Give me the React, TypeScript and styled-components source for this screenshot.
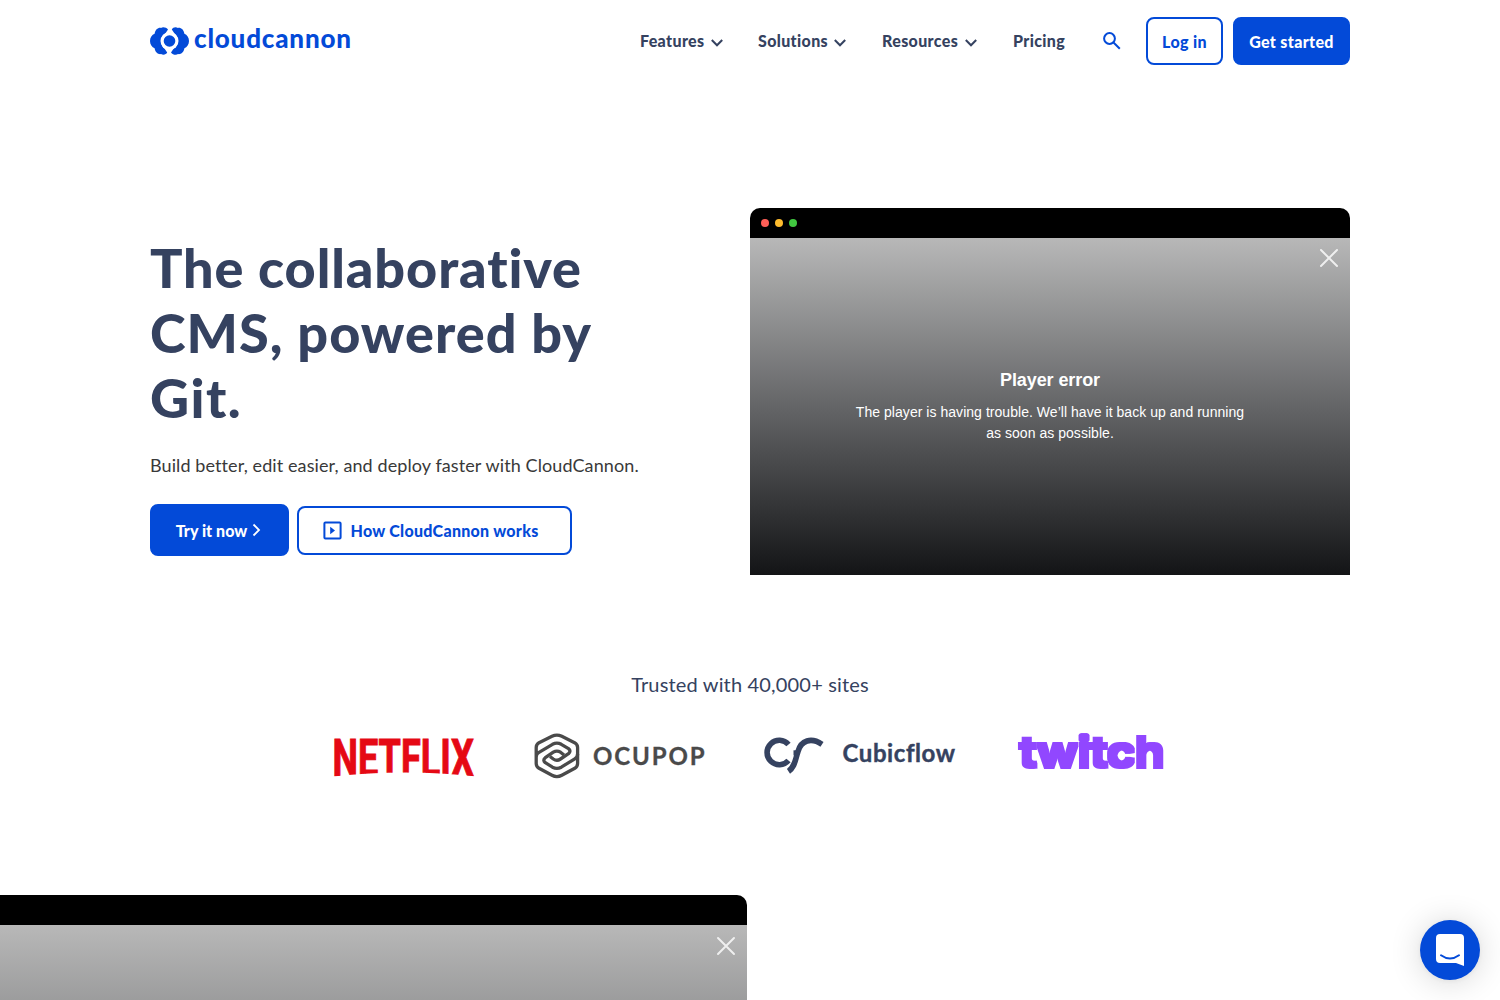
import React from "react";
import styled, { createGlobalStyle } from "styled-components";

const blue = "#034ad8";
const navy = "#354260";

const GlobalStyle = createGlobalStyle`
  * { box-sizing: border-box; }
  html, body { margin: 0; height: 1000px; overflow: hidden; background: #fff; }
  body { font-family: Lato, "Open Sans", sans-serif; font-variant-ligatures: none; color: ${navy}; -webkit-font-smoothing: antialiased; }
  svg { display: block; flex: none; overflow: visible; }
  a { color: inherit; text-decoration: none; }
`;

const Page = styled.div`
  height: 1000px;
  overflow: hidden;
`;

const Header = styled.header`
  width: 1200px;
  height: 82px;
  margin: 0 auto;
  display: flex;
  align-items: center;
  justify-content: space-between;
`;

const Brand = styled.a`
  display: flex;
  padding-top: 2px;
`;

const Nav = styled.nav`
  display: flex;
  align-items: center;
`;

const NavLink = styled.a<{ $w: number; $after?: number }>`
  display: flex;
  align-items: center;
  gap: 6px;
  margin-right: ${(p) => p.$after ?? 35}px;
  font-size: 16px;
  line-height: 24px;
  font-weight: 900;
  letter-spacing: 0.36px;
  white-space: nowrap;
  svg { margin-top: 3px; }
  span { width: ${(p) => p.$w}px; }
`;

const SearchButton = styled.a`
  margin: 0 25px 0 3px;
`;

const Button = styled.a<{ $filled?: boolean; $w: number; $h: number; $ls?: number }>`
  width: ${(p) => p.$w}px;
  height: ${(p) => p.$h}px;
  display: flex;
  align-items: center;
  justify-content: center;
  border: 2px solid ${blue};
  border-radius: 8px;
  background: ${(p) => (p.$filled ? blue : "#fff")};
  color: ${(p) => (p.$filled ? "#fff" : blue)};
  font-size: 16px;
  font-weight: 900;
  letter-spacing: ${(p) => p.$ls ?? 0.35}px;
  white-space: nowrap;
`;

const HeaderActions = styled.div`
  display: flex;
  gap: 10px;
`;

const Hero = styled.section`
  width: 1200px;
  margin: 126px auto 0;
  display: grid;
  grid-template-columns: 600px 600px;
`;

const HeroCopy = styled.div`
  padding-top: 27px;
`;

const Title = styled.h1`
  margin: 0;
  font-size: 54px;
  line-height: 65px;
  font-weight: 900;
`;

const Line = styled.span<{ $ls: number }>`
  display: block;
  letter-spacing: ${(p) => p.$ls}px;
`;

const Lead = styled.p`
  margin: 19px 0 23px;
  font-size: 18px;
  line-height: 32px;
  color: #393939;
  letter-spacing: 0.1px;
  white-space: nowrap;
`;

const HeroActions = styled.div`
  display: flex;
  align-items: center;
  gap: 8px;
`;

const Player = styled.div<{ $w: number; $bodyH: number; $bleed?: number }>`
  width: ${(p) => p.$w}px;
  margin-left: ${(p) => -(p.$bleed ?? 0)}px;
  border-radius: 10px 10px 0 0;
  overflow: hidden;
  .body { height: ${(p) => p.$bodyH}px; }
`;

const TitleBar = styled.div`
  height: 30px;
  padding-left: 11px;
  display: flex;
  align-items: center;
  gap: 6px;
  background: #000;
`;

const Dot = styled.i<{ $c: string }>`
  width: 8px;
  height: 8px;
  border-radius: 50%;
  background: ${(p) => p.$c};
`;

const Screen = styled.div<{ $top?: number }>`
  display: flex;
  flex-direction: column;
  align-items: flex-end;
  padding: ${(p) => p.$top ?? 11}px 12px 0;
  background: linear-gradient(#b8b8b8, #646567 50%, #131416);
  color: #fff;
  font-family: "Liberation Sans", Arial, sans-serif;
`;

const Message = styled.div`
  align-self: stretch;
  margin-top: 100px;
  text-align: center;
  font-size: 14px;
  line-height: 21px;
`;

const MessageTitle = styled.div`
  margin-bottom: 9px;
  font-size: 18px;
  line-height: 26px;
  font-weight: 700;
  letter-spacing: -0.1px;
`;

const MessageLine = styled.div`
  letter-spacing: 0.04px;
`;

const Trusted = styled.section`
  margin-top: 93px;
`;

const TrustedTitle = styled.p`
  margin: 0;
  text-align: center;
  font-size: 20px;
  line-height: 32px;
  letter-spacing: 0.17px;
`;

const Logos = styled.div`
  display: flex;
  gap: 40px;
  margin: 25px 0 0 325px;
  height: 60px;
`;

const Showcase = styled.section`
  margin-top: 110px;
`;

const Chat = styled.button`
  position: fixed;
  right: 20px;
  bottom: 20px;
  width: 60px;
  height: 60px;
  padding: 0;
  display: grid;
  place-items: center;
  border: 0;
  border-radius: 50%;
  background: ${blue};
  box-shadow: 0 1px 6px rgba(0, 0, 0, 0.06), 0 2px 32px rgba(0, 0, 0, 0.16);
`;

const PlayIcon = styled.svg`
  margin: 0 8px 0 -7px;
`;

const ArrowIcon = styled.svg`
  margin: -1px 2px 0 5px;
`;

const Chevron = () => (
  <svg width="12" height="8" viewBox="0 0 12 8" fill="none" stroke={navy} strokeWidth="2">
    <path d="M.8 1 6 6.3 11.2 1" />
  </svg>
);

const Close = () => (
  <svg width="18" height="18" viewBox="0 0 18 18" stroke="#fff" strokeOpacity=".8" strokeWidth="2" strokeLinecap="round">
    <path d="M1 1 17 17M17 1 1 17" />
  </svg>
);

const CloudCannon = () => (
  <svg width="202" height="30" viewBox="0 0 202 30">
    <g fill={blue}>
      <path d="M18 2.600C16.500.2 12.600-.2 11 .9 8 .4 5.200 2.800 4.600 6.800 2 7.800 0 10.500 0 14s2 6.200 4.600 7.200C5.200 25.200 8 27.600 11 27.100c2.200 1.100 5 .8 6.200-1.500L14.800 22Q11 19 11 14T15.500 6.200Z" />
      <path d="M21 25.400C22.500 27.800 26.400 28.200 28 27.100c3 .5 5.800-1.900 6.400-5.900C37 20.200 39 17.500 39 14s-2-6.200-4.600-7.200C33.800 2.800 31 .4 28 .9 25.800-.2 23 .1 21.800 2.400L24.200 6Q28 9 28 14T23.500 21.800Z" />
      <circle cx="19.500" cy="14" r="9" fill="#fff" />
      <circle cx="19.500" cy="14" r="5.800" />
      <text x="44" y="21" fontFamily="Lato, sans-serif" fontWeight="900" fontSize="26" textLength="157" lengthAdjust="spacing">cloudcannon</text>
    </g>
  </svg>
);

const Netflix = () => (
  <svg width="160" height="60" viewBox="0 0 160 60">
    <clipPath id="arch"><path d="M0 0H160V52.500Q79 42.500 0 52.500Z" /></clipPath>
    <g clipPath="url(#arch)">
      <text x="7.500" y="50.500" fill="#e50914" stroke="#e50914" strokeWidth="1" fontFamily="Roboto, sans-serif" fontWeight="700" fontSize="51" textLength="141.500" lengthAdjust="spacingAndGlyphs">NETFLIX</text>
    </g>
  </svg>
);

const Ocupop = () => (
  <svg width="190" height="60" viewBox="0 0 190 60">
    <g fill="none" stroke="#4a4a4a" strokeWidth="3.300" strokeLinejoin="round">
      <path d="M11.200 33V22.500Q11.200 19.500 14 17.700L27 11.300Q31.900 9 36.800 11.300L49.600 17.700Q52.600 19.500 52.600 22.500V38.500Q52.600 41.500 49.800 43.300L36.800 50.300Q31.900 53 27 50.300L14 43.300Q11.200 41.500 11.200 38.500V32Q11.200 29 14 27.400L27.500 19.300Q31.900 17 36.300 19.300L43.500 23.600Q46.500 26 43.500 28.700L35.500 34Q31.900 36.500 28.300 34L25 31.500" />
      <path d="M52.600 29Q52.600 32 49.800 33.800L36.300 42.200Q31.900 44.600 27.500 42.200L20.300 37.700Q17.300 35.200 20.300 32.700L28.300 27.200Q31.900 24.900 35.500 27.200L39 30" />
    </g>
    <text x="68" y="39.500" fill="#4a4a4a" stroke="#4a4a4a" strokeWidth=".3" fontFamily="Lato, sans-serif" fontWeight="700" fontSize="24" textLength="111.500" lengthAdjust="spacing">OCUPOP</text>
  </svg>
);

const Cubicflow = () => (
  <svg width="210" height="60" viewBox="0 0 210 60">
    <g fill="none" stroke={navy} strokeWidth="5.600">
      <path d="M33.500 19.500A12.200 12.200 0 1 0 33.500 35.500" />
      <path d="M33.500 46.300C40 42 40 35 43 26.500C46 15.500 56 12 67 19.300" />
      <path d="M38.500 27.800H43" strokeWidth="5" />
    </g>
    <text x="87.500" y="36.500" fill={navy} fontFamily="Lato, sans-serif" fontWeight="700" stroke={navy} strokeWidth=".4" fontSize="24" textLength="112.500" lengthAdjust="spacing">Cubicflow</text>
  </svg>
);

const Twitch = () => (
  <svg width="170" height="60" viewBox="0 0 170 60">
    <filter id="block" x="-5%" y="-20%" width="110%" height="140%">
      <feMorphology operator="dilate" radius="2" />
    </filter>
    <text x="14.500" y="42" fill="#9146ff" filter="url(#block)" fontFamily="Inter, sans-serif" fontWeight="600" fontSize="41" textLength="145" lengthAdjust="spacingAndGlyphs">twitch</text>
  </svg>
);

export default function App() {
  return (
    <Page>
      <GlobalStyle />
      <Header>
        <Brand href="#"><CloudCannon /></Brand>
        <Nav>
          <NavLink $w={65}><span>Features</span><Chevron /></NavLink>
          <NavLink $w={70} $after={36}><span>Solutions</span><Chevron /></NavLink>
          <NavLink $w={77} $after={36}><span>Resources</span><Chevron /></NavLink>
          <NavLink $w={52}><span>Pricing</span></NavLink>
          <SearchButton>
            <svg width="18" height="18" viewBox="0 0 18 18" fill="none" stroke={blue} strokeWidth="2">
              <circle cx="6.500" cy="6.500" r="5.400" />
              <path d="m10.500 10.500 6.300 6.300" />
            </svg>
          </SearchButton>
          <HeaderActions>
            <Button $w={77} $h={48}>Log in</Button>
            <Button $filled $w={117} $h={48}>Get started</Button>
          </HeaderActions>
        </Nav>
      </Header>

      <Hero>
        <HeroCopy>
          <Title>
            <Line $ls={0.88}>The collaborative</Line>
            <Line $ls={1}>CMS, powered by</Line>
            <Line $ls={1.4}>Git.</Line>
          </Title>
          <Lead>Build better, edit easier, and deploy faster with CloudCannon.</Lead>
          <HeroActions>
            <Button $filled $w={139} $h={52} $ls={0.05}>
              Try it now
              <ArrowIcon width="9" height="14" viewBox="0 0 9 14" fill="none" stroke="#fff" strokeWidth="1.800">
                <path d="m1.500 1.500 5.500 5.500-5.500 5.500" />
              </ArrowIcon>
            </Button>
            <Button $w={275} $h={49} $ls={0.28}>
              <PlayIcon width="19" height="19" viewBox="0 0 19 19">
                <rect x="1.400" y="1.400" width="16.200" height="16.200" rx="1" fill="none" stroke={blue} strokeWidth="2" />
                <path d="M7.200 5.800 12 9.500 7.200 13.200Z" fill={blue} />
              </PlayIcon>
              How CloudCannon works
            </Button>
          </HeroActions>
        </HeroCopy>
        <Player $w={600} $bodyH={337}>
          <TitleBar><Dot $c="#ff5f57" /><Dot $c="#febc2e" /><Dot $c="#41c840" /></TitleBar>
          <Screen className="body">
            <Close />
            <Message>
              <MessageTitle>Player error</MessageTitle>
              <MessageLine>The player is having trouble. We’ll have it back up and running</MessageLine>
              <MessageLine>as soon as possible.</MessageLine>
            </Message>
          </Screen>
        </Player>
      </Hero>

      <Trusted>
        <TrustedTitle>Trusted with 40,000+ sites</TrustedTitle>
        <Logos><Netflix /><Ocupop /><Cubicflow /><Twitch /></Logos>
      </Trusted>

      <Showcase>
        <Player $w={807} $bodyH={454} $bleed={60}>
          <TitleBar />
          <Screen className="body" $top={12}><Close /></Screen>
        </Player>
      </Showcase>

      <Chat aria-label="Open chat">
        <svg width="28" height="32" viewBox="0 0 28 32">
          <path d="M4 0H24a4 4 0 0 1 4 4V32L20 29H4a4 4 0 0 1-4-4V4a4 4 0 0 1 4-4Z" fill="#fff" />
          <path d="M5 21.300Q14 27.800 23 21.300" fill="none" stroke={blue} strokeWidth="2" strokeLinecap="round" />
        </svg>
      </Chat>
    </Page>
  );
}
